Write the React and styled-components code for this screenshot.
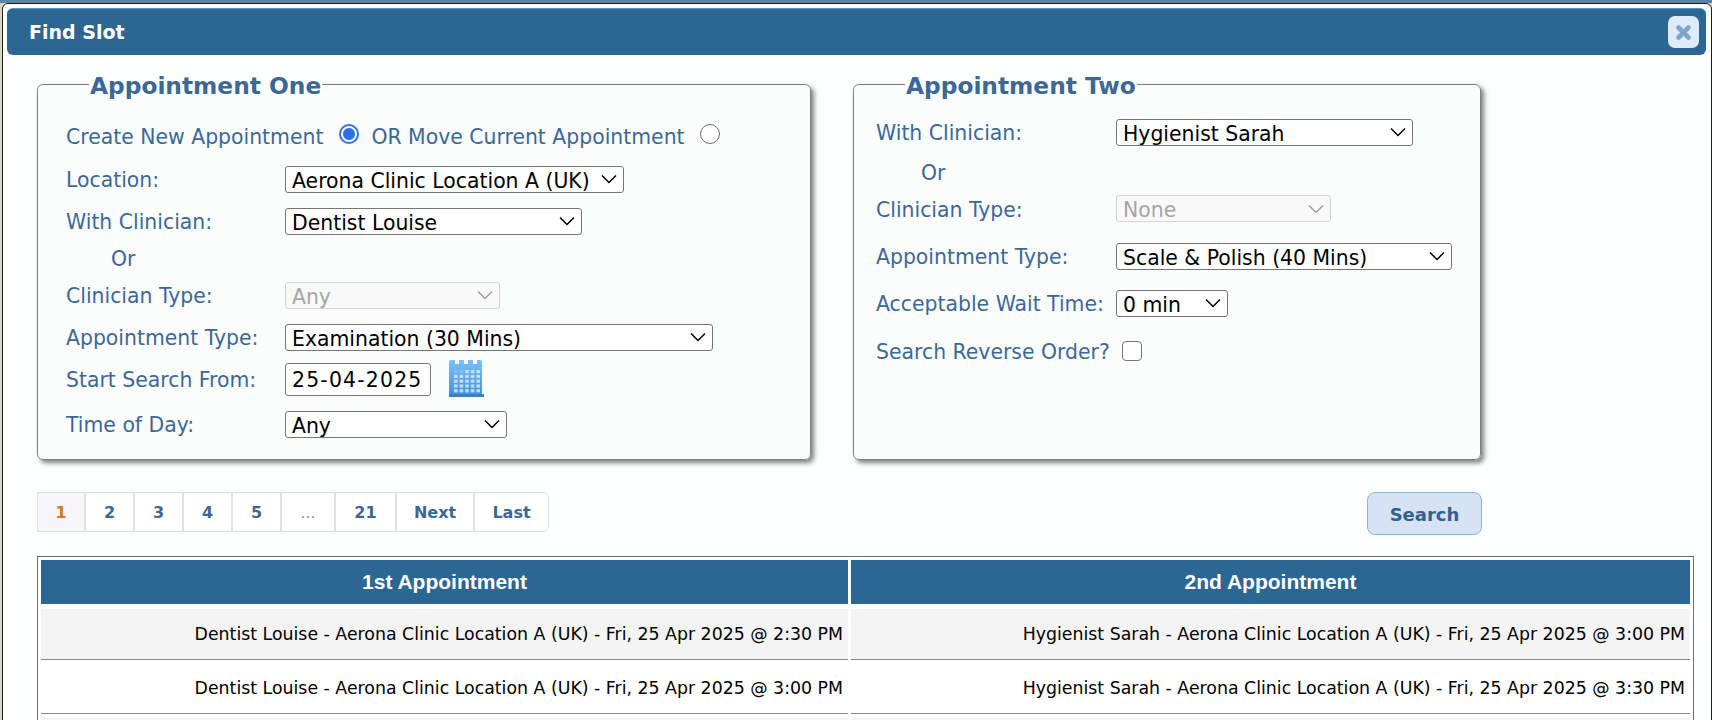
import React from 'react'
import styled, { createGlobalStyle } from 'styled-components'

const chevron = (color) =>
  `url("data:image/svg+xml,%3Csvg xmlns='http://www.w3.org/2000/svg' width='16' height='10' viewBox='0 0 16 10'%3E%3Cpath d='M1 1.5 L8 8.5 L15 1.5' fill='none' stroke='${color}' stroke-width='1.5'/%3E%3C/svg%3E")`

const GlobalStyle = createGlobalStyle`
  html, body {
    margin: 0;
    height: 720px;
    overflow: hidden;
    background: #5d84a5;
    font-family: "DejaVu Sans", sans-serif;
  }
`

const Backdrop = styled.div`
  height: 720px;
  padding: 3px 0 0 2px;
  box-sizing: border-box;
  background: linear-gradient(#5d84a5 3px, #d9d6c4 3px);
`
const Modal = styled.div`
  height: 760px;
  box-sizing: border-box;
  background: #fdfefe;
  border: 1px solid #1d1d1d;
  border-radius: 6px 6px 0 0;
  padding: 4px 5px 0 4px;
`
const TitleBar = styled.div`
  height: 47px;
  box-sizing: border-box;
  background: #2c6693;
  border-top: 1px solid #5b93c2;
  border-radius: 6px;
  display: flex;
  align-items: center;
  justify-content: space-between;
  padding: 0 7px 0 22px;
`
const Title = styled.span`
  color: #fff;
  font-size: 19px;
  font-weight: bold;
`
const CloseButton = styled.button`
  width: 31px;
  height: 32px;
  padding: 0;
  border: 0;
  border-radius: 7px;
  background: #dfeafa;
  display: flex;
  align-items: center;
  justify-content: center;
`
const Content = styled.div`
  padding: 16px 0 0 30px;
`
const Panels = styled.div`
  display: flex;
  gap: 42px;
`
const Panel = styled.fieldset`
  box-sizing: border-box;
  margin: 0;
  width: ${(props) => props.$width}px;
  height: 389px;
  padding: 0 0 0 ${(props) => props.$pad}px;
  border: 1px solid #808080;
  border-radius: 6px;
  background: #fbfdfd;
  box-shadow: 3px 3px 5px rgba(0, 0, 0, 0.5);
`
const PanelTitle = styled.legend`
  margin-left: ${(props) => props.$left}px;
  padding: 0 1px;
  height: 26px;
  line-height: 30px;
  font-size: 23.3px;
  font-weight: bold;
  color: #3b6896;
  background: #fdfefe;
`
const Form = styled.div`
  padding-top: ${(props) => props.$top}px;
`
const Row = styled.div`
  display: flex;
  align-items: center;
  height: ${(props) => props.$h || 42}px;
`
const Label = styled.label`
  width: ${(props) => props.$width}px;
  flex: none;
  padding-top: 2px;
  font-size: 20.4px;
  color: #3b6896;
  white-space: nowrap;
`
const OrText = styled.span`
  margin-left: 45px;
  padding-top: 2px;
  font-size: 20.4px;
  color: #3b6896;
`
const PlainText = styled.span`
  font-size: 20.4px;
  color: #3b6896;
  white-space: nowrap;
`
const Select = styled.select`
  appearance: none;
  box-sizing: border-box;
  width: ${(props) => props.$width}px;
  height: 27px;
  padding: 2px 0 0 6px;
  border: 1px solid ${(props) => (props.disabled ? '#d4d4d4' : '#767676')};
  border-radius: 3px;
  font-family: inherit;
  font-size: 20.4px;
  color: ${(props) => (props.disabled ? '#a5a5a5' : '#000')};
  background: ${(props) => (props.disabled ? '#f9f9f9' : '#fff')}
    ${(props) => chevron(props.disabled ? '%23a0a0a0' : '%23000')} no-repeat right 6px center;
  opacity: 1;
`
const DateInput = styled.input`
  box-sizing: border-box;
  width: 146px;
  height: 33px;
  padding: 2px 0 0 6px;
  border: 1px solid #767676;
  border-radius: 3px;
  font-family: inherit;
  font-size: 20.4px;
  letter-spacing: 1.2px;
  color: #000;
`
const CalendarButton = styled.span`
  display: inline-flex;
  margin-left: 16px;
`
const Radio = styled.input`
  appearance: none;
  box-sizing: border-box;
  width: 20px;
  height: 20px;
  margin: 0 ${(props) => props.$after}px 6px ${(props) => props.$before}px;
  border: 1px solid #6b6b6b;
  border-radius: 50%;
  background: #fff;
  &:checked {
    border: 2px solid #2f6fe8;
    background: radial-gradient(circle, #2f6fe8 0 5.5px, #fff 6.5px);
  }
`
const CheckBox = styled.input`
  appearance: none;
  box-sizing: border-box;
  width: 20px;
  height: 20px;
  margin: 0 0 0 6px;
  border: 1.5px solid #767676;
  border-radius: 4px;
  background: #fff;
`
const Toolbar = styled.div`
  display: flex;
  justify-content: space-between;
  align-items: flex-start;
  margin-top: 32px;
  width: 1445px;
`
const Pager = styled.div`
  display: flex;
  height: 40px;
  box-sizing: border-box;
  border: 1px solid #dedede;
  border-radius: 0 6px 6px 0;
  background: #fff;
`
const PageLink = styled.a`
  width: ${(props) => props.$width}px;
  box-sizing: border-box;
  display: flex;
  align-items: center;
  justify-content: center;
  border-right: ${(props) => (props.$last ? 'none' : '2px solid #e2e2e2')};
  background: ${(props) => (props.$current ? '#f7f7f9' : 'transparent')};
  color: ${(props) => (props.$current ? '#dc7426' : props.$muted ? '#7d95b0' : '#3b6896')};
  font-size: 16px;
  font-weight: ${(props) => (props.$muted ? 'normal' : 'bold')};
`
const SearchButton = styled.button`
  width: 115px;
  height: 43px;
  padding: 2px 0 0;
  border: 1px solid #8fb4dc;
  border-radius: 8px;
  background: #d5e3f3;
  color: #33608f;
  font-family: inherit;
  font-size: 18px;
  font-weight: bold;
`
const ResultsTable = styled.table`
  margin-top: 21px;
  width: 1657px;
  table-layout: fixed;
  border-collapse: separate;
  border-spacing: 3px;
  border: 1px solid #6f6f6f;
  background: #fff;
`
const HeadCell = styled.th`
  width: ${(props) => props.$width || 'auto'};
  height: 44px;
  padding: 0;
  background: #2c6693;
  background-clip: padding-box;
  border-bottom: 2px solid transparent;
  color: #fff;
  font-family: "Liberation Sans", sans-serif;
  font-size: 21px;
  font-weight: bold;
`
const SlotCell = styled.td`
  height: 50px;
  padding: 0 5px 0 0;
  text-align: right;
  font-size: 17.35px;
  color: #000;
  white-space: nowrap;
  background: ${(props) => (props.$odd ? '#f4f4f4' : '#fff')};
  border-bottom: 1px solid #8a8a8a;
`

const PAGES = [
  { text: '1', width: 48, current: true },
  { text: '2', width: 49 },
  { text: '3', width: 49 },
  { text: '4', width: 49 },
  { text: '5', width: 49 },
  { text: '...', width: 54, muted: true },
  { text: '21', width: 61 },
  { text: 'Next', width: 78 },
  { text: 'Last', width: 73, last: true },
]

const SLOTS = [
  ['Dentist Louise - Aerona Clinic Location A (UK) - Fri, 25 Apr 2025 @ 2:30 PM', 'Hygienist Sarah - Aerona Clinic Location A (UK) - Fri, 25 Apr 2025 @ 3:00 PM'],
  ['Dentist Louise - Aerona Clinic Location A (UK) - Fri, 25 Apr 2025 @ 3:00 PM', 'Hygienist Sarah - Aerona Clinic Location A (UK) - Fri, 25 Apr 2025 @ 3:30 PM'],
  ['', ''],
]

const CloseIcon = () => (
  <svg width="17" height="17" viewBox="0 0 17 17">
    <path d="M3.5 3.5 L13.5 13.5 M13.5 3.5 L3.5 13.5" stroke="#7ea4cc" strokeWidth="4.6" strokeLinecap="round" />
  </svg>
)

const CalendarIcon = () => (
  <svg width="39" height="38" viewBox="0 0 39 38">
    <defs>
      <linearGradient id="calBody" x1="0" y1="0" x2="0" y2="1">
        <stop offset="0" stopColor="#7cc0f7" />
        <stop offset="1" stopColor="#3f8fe0" />
      </linearGradient>
    </defs>
    <path d="M2 2a2 2 0 0 1 2-2h4v4h4V0h5v4h4V0h5v4h4V0h3a2 2 0 0 1 2 2v32a3 3 0 0 1-3 3H5a3 3 0 0 1-3-3z" fill="url(#calBody)" />
    <rect x="2" y="34" width="35" height="3" fill="#3a80c8" />
    {[0, 1, 2, 3, 4].map((r) =>
      [0, 1, 2, 3, 4].map((c) => (
        <rect key={`${r}-${c}`} x={7 + c * 5.6} y={10 + r * 4.8} width="3.6" height="3.2" fill="#d4e9fb" opacity={r === 0 && c < 2 ? 0.25 : 0.85} />
      ))
    )}
  </svg>
)

const App = () => {
  return (
    <Backdrop>
      <GlobalStyle />
      <Modal>
        <TitleBar>
          <Title>Find Slot</Title>
          <CloseButton aria-label="Close">
            <CloseIcon />
          </CloseButton>
        </TitleBar>
        <Content>
          <Panels>
            <Panel $width={774} $pad={28}>
              <PanelTitle $left={23}>Appointment One</PanelTitle>
              <Form $top={19}>
                <Row>
                  <PlainText>Create New Appointment</PlainText>
                  <Radio type="radio" name="mode" defaultChecked $before={16} $after={12} />
                  <PlainText>OR Move Current Appointment</PlainText>
                  <Radio type="radio" name="mode" $before={15} $after={0} />
                </Row>
                <Row>
                  <Label $width={219}>Location:</Label>
                  <Select $width={339} defaultValue="a">
                    <option value="a">Aerona Clinic Location A (UK)</option>
                  </Select>
                </Row>
                <Row>
                  <Label $width={219}>With Clinician:</Label>
                  <Select $width={297} defaultValue="l">
                    <option value="l">Dentist Louise</option>
                  </Select>
                </Row>
                <Row $h={32}>
                  <OrText>Or</OrText>
                </Row>
                <Row>
                  <Label $width={219}>Clinician Type:</Label>
                  <Select $width={215} disabled defaultValue="any">
                    <option value="any">Any</option>
                  </Select>
                </Row>
                <Row>
                  <Label $width={219}>Appointment Type:</Label>
                  <Select $width={428} defaultValue="e">
                    <option value="e">Examination (30 Mins)</option>
                  </Select>
                </Row>
                <Row>
                  <Label $width={219}>Start Search From:</Label>
                  <DateInput type="text" defaultValue="25-04-2025" />
                  <CalendarButton>
                    <CalendarIcon />
                  </CalendarButton>
                </Row>
                <Row $h={48}>
                  <Label $width={219}>Time of Day:</Label>
                  <Select $width={222} defaultValue="any">
                    <option value="any">Any</option>
                  </Select>
                </Row>
              </Form>
            </Panel>
            <Panel $width={628} $pad={22}>
              <PanelTitle $left={29}>Appointment Two</PanelTitle>
              <Form $top={13}>
                <Row $h={44}>
                  <Label $width={240}>With Clinician:</Label>
                  <Select $width={297} defaultValue="s">
                    <option value="s">Hygienist Sarah</option>
                  </Select>
                </Row>
                <Row $h={36}>
                  <OrText>Or</OrText>
                </Row>
                <Row $h={37}>
                  <Label $width={240}>Clinician Type:</Label>
                  <Select $width={215} disabled defaultValue="none">
                    <option value="none">None</option>
                  </Select>
                </Row>
                <Row $h={58}>
                  <Label $width={240}>Appointment Type:</Label>
                  <Select $width={336} defaultValue="p">
                    <option value="p">Scale &amp; Polish (40 Mins)</option>
                  </Select>
                </Row>
                <Row $h={36}>
                  <Label $width={240}>Acceptable Wait Time:</Label>
                  <Select $width={112} defaultValue="0">
                    <option value="0">0 min</option>
                  </Select>
                </Row>
                <Row $h={60}>
                  <Label $width={240}>Search Reverse Order?</Label>
                  <CheckBox type="checkbox" />
                </Row>
              </Form>
            </Panel>
          </Panels>
          <Toolbar>
            <Pager>
              {PAGES.map((page) => (
                <PageLink key={page.text} $width={page.width} $current={page.current} $muted={page.muted} $last={page.last}>
                  {page.text}
                </PageLink>
              ))}
            </Pager>
            <SearchButton>Search</SearchButton>
          </Toolbar>
          <ResultsTable>
            <thead>
              <tr>
                <HeadCell $width="807px">1st Appointment</HeadCell>
                <HeadCell>2nd Appointment</HeadCell>
              </tr>
            </thead>
            <tbody>
              {SLOTS.map((slot, i) => (
                <tr key={i}>
                  <SlotCell $odd={i % 2 === 0}>{slot[0]}</SlotCell>
                  <SlotCell $odd={i % 2 === 0}>{slot[1]}</SlotCell>
                </tr>
              ))}
            </tbody>
          </ResultsTable>
        </Content>
      </Modal>
    </Backdrop>
  )
}

export default App
